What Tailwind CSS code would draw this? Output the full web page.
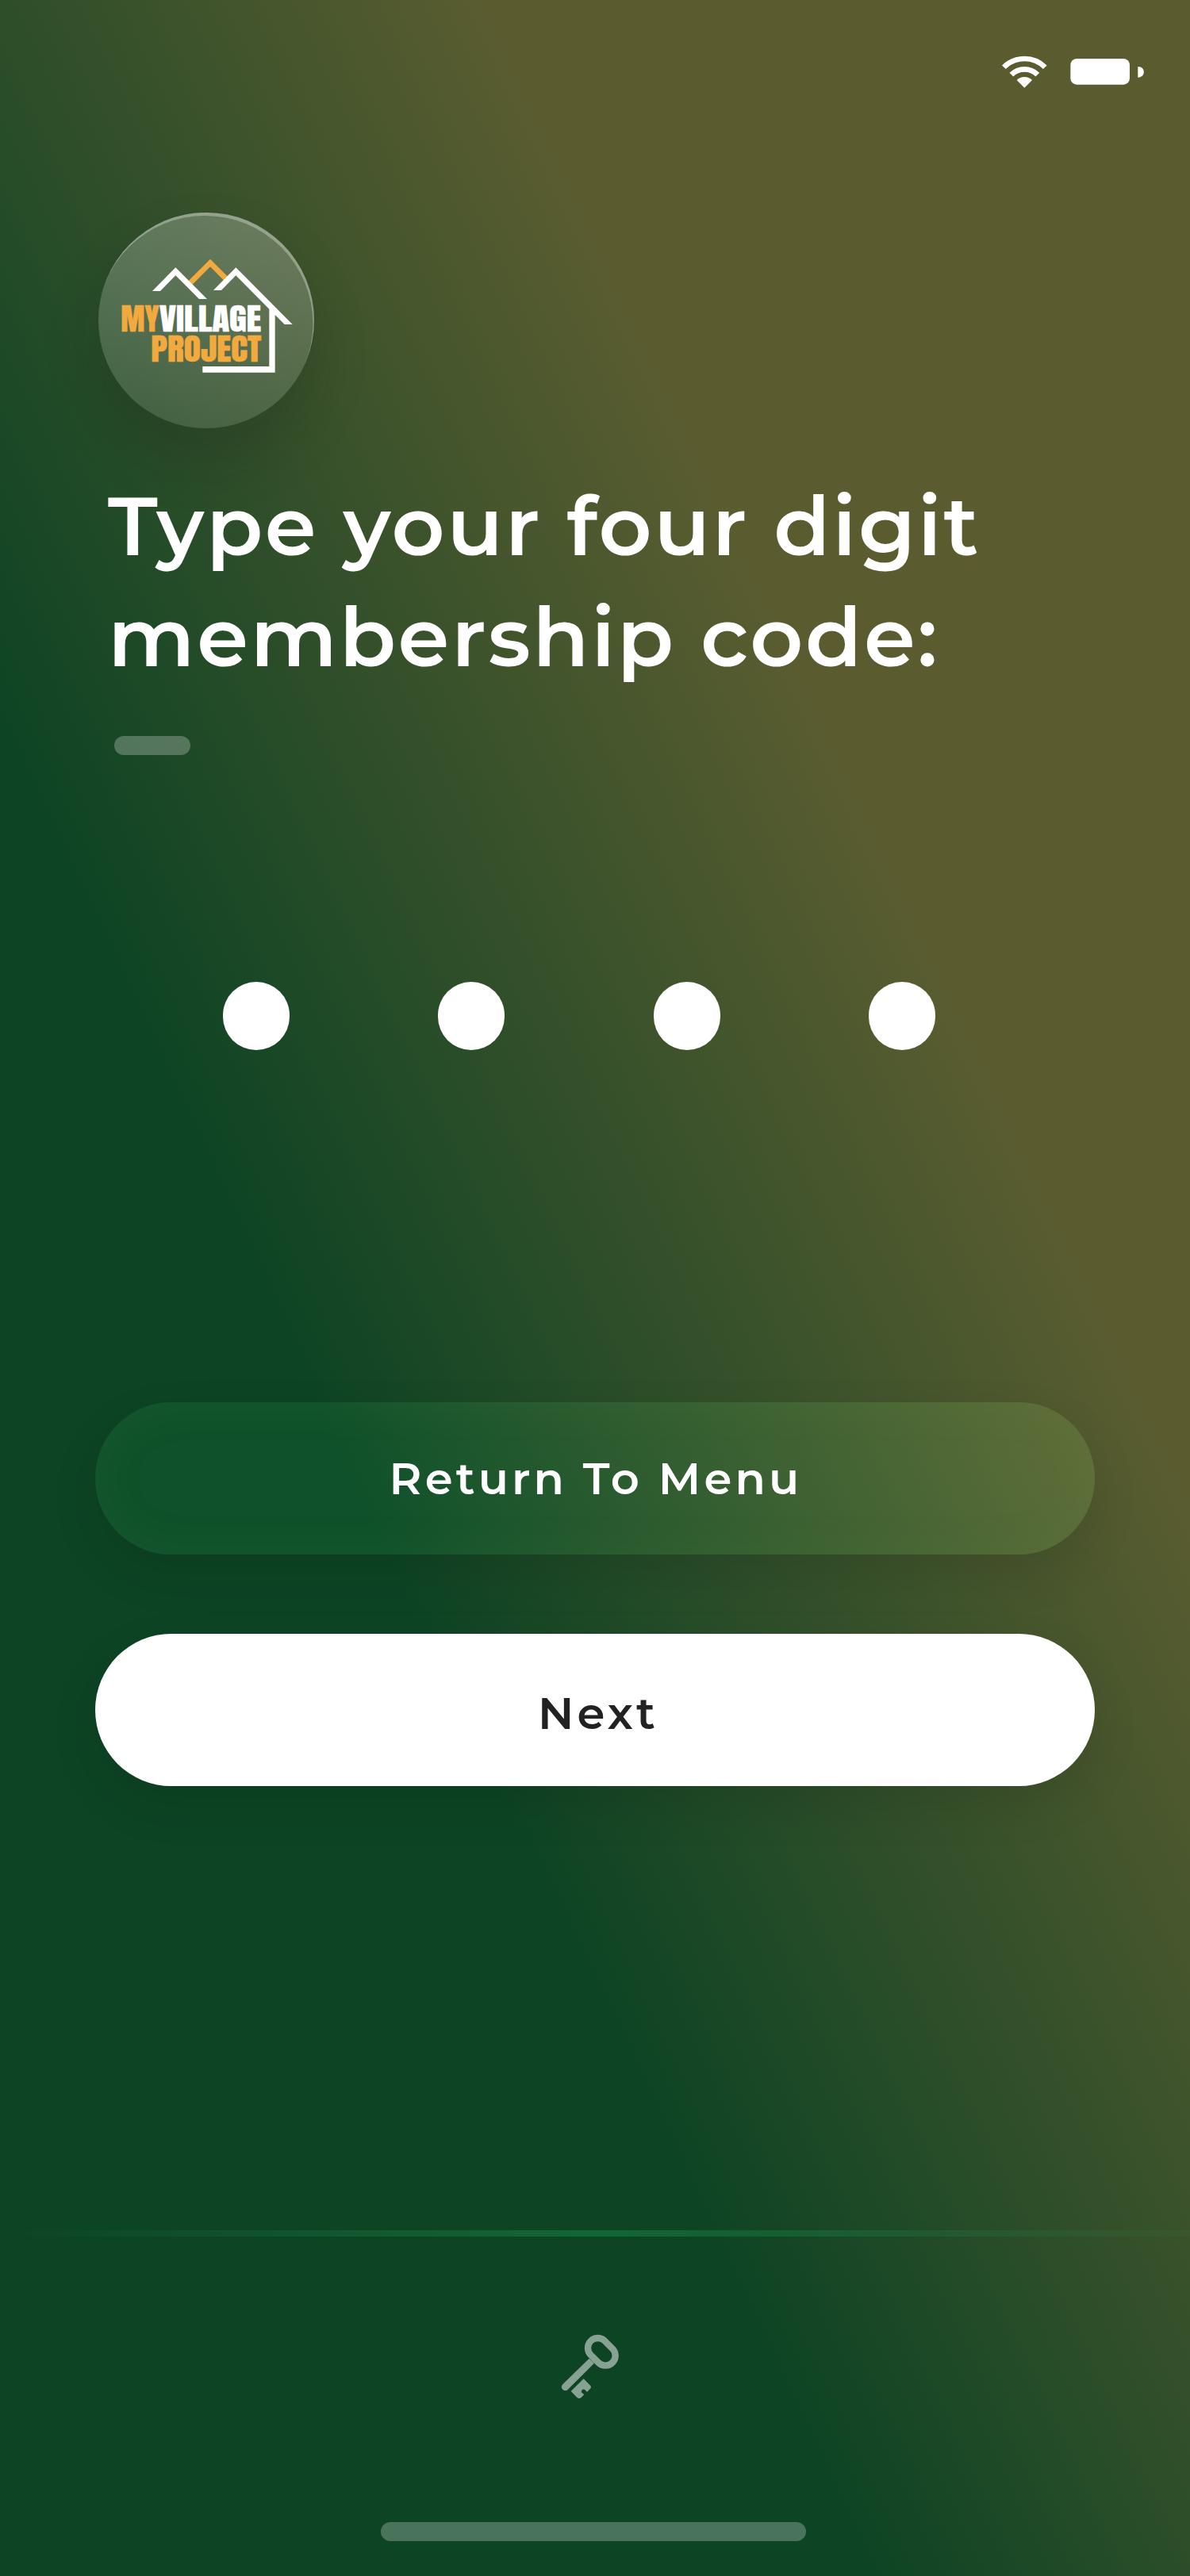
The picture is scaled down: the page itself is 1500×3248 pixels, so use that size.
<!DOCTYPE html>
<html lang="en">
<head>
<meta charset="utf-8">
<title>MyVillage Project – Membership code</title>
<script src="https://cdn.jsdelivr.net/npm/@tailwindcss/browser@4"></script>
</head>
<body>
<main class="flex h-[3248px] w-[1500px] flex-col overflow-hidden bg-[linear-gradient(64.8deg,#0d4424_36%,#5a5c30_70.5%)] font-[Montserrat,Inter,sans-serif] text-white">

  <!-- Status bar -->
  <header class="flex h-[268px] items-start justify-end gap-[29px] pt-[70px] pr-[57px]">
    <svg class="h-[42px] w-[58px]" viewBox="126 90 174 126" fill="none" stroke="#fff" stroke-width="20" aria-label="Wi-Fi">
      <path d="M136.2 134.2A110 110 0 0 1 291.8 134.2"/>
      <path d="M164.5 162.5A70 70 0 0 1 263.5 162.5"/>
      <path d="M214 212L185 183A41 41 0 0 1 243 183Z" fill="#fff" stroke="none"/>
    </svg>
    <svg class="mt-[3px] h-[35px] w-[94px]" viewBox="387 99 282 105" fill="#fff" aria-label="Battery">
      <rect x="388" y="102" width="224" height="98" rx="24"/>
      <path d="M643 132C658 132 665.500 142 665.500 152.500S658 173 643 173Z"/>
    </svg>
  </header>

  <!-- Brand badge -->
  <div class="ml-[124px] size-[272px] shrink-0 rounded-full bg-linear-to-b from-white/24 to-white/12 shadow-[0_40px_70px_rgba(20,20,20,0.18),inset_-1.6px_4px_0_rgba(255,255,255,0.3)]">
    <svg class="size-[272px]" viewBox="72 84 816 816" aria-label="MyVillage Project">
      <g fill="#f2a93d">
        <path d="M413 342L495 260L562 327L547 341L495 289L427 357Z"/>
        <g font-family="Anton, Impact, sans-serif" font-size="113" stroke="#f2a93d" stroke-width="1.5">
          <text x="157" y="534" textLength="145" lengthAdjust="spacingAndGlyphs">MY</text>
          <text x="271" y="647" textLength="417" lengthAdjust="spacingAndGlyphs">PROJECT</text>
        </g>
      </g>
      <g fill="#fff">
        <path d="M276 381L364 292L483 411H453L364 322L306 381Z"/>
        <path d="M507 378L592 292L806 507H776L740 471V689H466V666H718V449L592 322L537 378Z"/>
        <text x="303" y="534" font-family="Anton, Impact, sans-serif" font-size="113" stroke="#fff" stroke-width="1.5" textLength="384" lengthAdjust="spacingAndGlyphs">VILLAGE</text>
      </g>
    </svg>
  </div>

  <!-- Prompt -->
  <h1 class="mt-[53px] ml-[136px] text-[104px] leading-[140px] font-semibold tracking-[2.6px] whitespace-nowrap"><span class="tracking-[-1.4px]">T</span>ype your four digit<br>membership code:</h1>
  <div class="mt-[55px] ml-[144px] h-6 w-24 shrink-0 rounded-full bg-white/25"></div>

  <!-- Code entry -->
  <div class="mt-[286px] ml-[280.500px] flex gap-[187.500px]">
    <span class="h-[86px] w-[84px] rounded-full bg-white"></span>
    <span class="h-[86px] w-[84px] rounded-full bg-white"></span>
    <span class="h-[86px] w-[84px] rounded-full bg-white"></span>
    <span class="h-[86px] w-[84px] rounded-full bg-white"></span>
  </div>

  <!-- Actions -->
  <div class="mt-[444px] flex flex-col gap-[100px] px-[120px] text-[56px] leading-[68px] font-semibold tracking-[4.2px]">
    <button class="flex h-48 items-center justify-center rounded-full bg-[linear-gradient(65deg,#0f512a_27%,#66703a_103.6%)] pl-0.5 shadow-[0_24px_60px_rgba(0,0,0,0.1),inset_0_0_60px_rgba(100,160,80,0.09)]"><span><span class="tracking-[4.2px]">Return </span><span class="tracking-[1.4px]">T</span>o Menu</span></button>
    <button class="flex h-48 items-center justify-center rounded-full bg-white pt-2 pl-2 text-[#222222] shadow-[0_24px_60px_rgba(0,0,0,0.1)]">Next</button>
  </div>

  <!-- Bottom bar -->
  <footer class="mt-[560px] flex flex-col items-center">
    <div class="h-2 w-full bg-linear-to-r from-[#14743e]/0 via-[#14743e]/72 to-[#3f7a3e]/10"></div>
    <svg class="mt-[100px] mr-[10px] size-[130px]" viewBox="0 0 390 390" opacity="0.5" aria-label="Membership key">
      <g fill="none" stroke="#fff">
        <rect x="-58" y="-37.500" width="116" height="75" rx="37.500" stroke-width="25" transform="translate(235 136) rotate(45)"/>
      </g>
      <path d="M188 161L88 259A13.500 13.500 0 0 0 107 279L207 179Z" fill="#fff"/>
      <path d="M167 238L192 263Q198 269 192 275L180 288L171 279A8 8 0 0 0 160 290L169 298L158 309Q150 315 142 309L119 285Z" fill="#fff"/>
    </svg>
    <div class="mt-[130px] mr-1 h-6 w-[536px] rounded-full bg-white/25"></div>
  </footer>
</main>
</body>
</html>
